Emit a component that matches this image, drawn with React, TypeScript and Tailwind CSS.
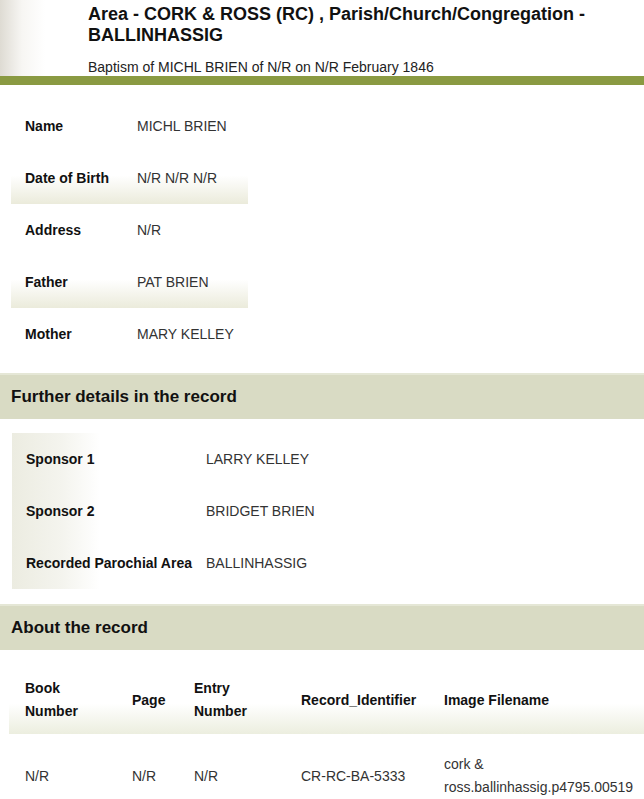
const personRows = [
  { label: 'Name', value: 'MICHL BRIEN', shade: false },
  { label: 'Date of Birth', value: 'N/R N/R N/R', shade: true },
  { label: 'Address', value: 'N/R', shade: false },
  { label: 'Father', value: 'PAT BRIEN', shade: true },
  { label: 'Mother', value: 'MARY KELLEY', shade: false },
];

const furtherRows = [
  { label: 'Sponsor 1', value: 'LARRY KELLEY' },
  { label: 'Sponsor 2', value: 'BRIDGET BRIEN' },
  { label: 'Recorded Parochial Area', value: 'BALLINHASSIG' },
];

function SectionHeader({ title }: { title: string }) {
  return (
    <div className="h-[46px] bg-[#d9dbc4] border-t-2 border-[#e5e7d6] flex items-center px-[11px]">
      <h2 className="text-[17px] font-bold text-[#111]">{title}</h2>
    </div>
  );
}

export default function App() {
  return (
    <div className="w-[644px] min-h-[799px] bg-white text-[#222] font-['Liberation_Sans',Arial,sans-serif] overflow-hidden">
      {/* header */}
      <div className="h-[76px] bg-[linear-gradient(to_right,#dedbd3,#f7f6f3_22px,#ffffff_45px)] pl-[88px] pt-[4px]">
        <h1 className="text-[18px] font-bold leading-[21px] text-[#111]">
          Area - CORK &amp; ROSS (RC) , Parish/Church/Congregation -<br />
          BALLINHASSIG
        </h1>
        <p className="text-[14px] mt-[13px] leading-[17px] text-[#222]">
          Baptism of MICHL BRIEN of N/R on N/R February 1846
        </p>
      </div>
      <div className="h-[9px] bg-[#8a9a42]" />

      {/* main details */}
      <div className="pt-[15px] pb-[13px] pl-[11px]">
        <table className="w-[237px] border-collapse">
          <tbody>
            {personRows.map((r) => (
              <tr
                key={r.label}
                className={
                  r.shade
                    ? 'h-[52px] bg-gradient-to-b from-white from-45% to-[#ebebdb]'
                    : 'h-[52px]'
                }
              >
                <td className="w-[126px] pl-[14px] text-[14px] font-bold text-[#111]">{r.label}</td>
                <td className="text-[14px] text-[#333]">{r.value}</td>
              </tr>
            ))}
          </tbody>
        </table>
      </div>

      <SectionHeader title="Further details in the record" />

      <div className="pt-[14px] pb-[15px] pl-[12px]">
        <table className="border-collapse bg-[linear-gradient(to_right,#ecece1,#f4f4ee_50px,#ffffff_88px)]">
          <tbody>
            {furtherRows.map((r) => (
              <tr key={r.label} className="h-[52px]">
                <td className="w-[194px] pl-[14px] text-[14px] font-bold text-[#111]">{r.label}</td>
                <td className="w-[150px] text-[14px] text-[#333]">{r.value}</td>
              </tr>
            ))}
          </tbody>
        </table>
      </div>

      <SectionHeader title="About the record" />

      <div className="pt-[16px] pl-[9px]">
        <table className="w-[635px] table-fixed border-collapse text-left">
          <thead>
            <tr className="h-[68px] bg-gradient-to-b from-white from-55% to-[#eceedf]">
              <th className="w-[123px] pl-[16px] text-[14px] font-bold leading-[23px] text-[#111]">
                Book<br />Number
              </th>
              <th className="w-[62px] text-[14px] font-bold text-[#111]">Page</th>
              <th className="w-[107px] text-[14px] font-bold leading-[23px] text-[#111]">
                Entry<br />Number
              </th>
              <th className="w-[143px] text-[14px] font-bold text-[#111]">Record_Identifier</th>
              <th className="text-[14px] font-bold text-[#111]">Image Filename</th>
            </tr>
          </thead>
          <tbody>
            <tr className="h-[84px]">
              <td className="pl-[16px] text-[14px] text-[#333]">N/R</td>
              <td className="text-[14px] text-[#333]">N/R</td>
              <td className="text-[14px] text-[#333]">N/R</td>
              <td className="text-[14px] text-[#333]">CR-RC-BA-5333</td>
              <td className="text-[14px] leading-[23px] text-[#333]">
                cork &amp;<br />ross.ballinhassig.p4795.00519
              </td>
            </tr>
          </tbody>
        </table>
      </div>
    </div>
  );
}
